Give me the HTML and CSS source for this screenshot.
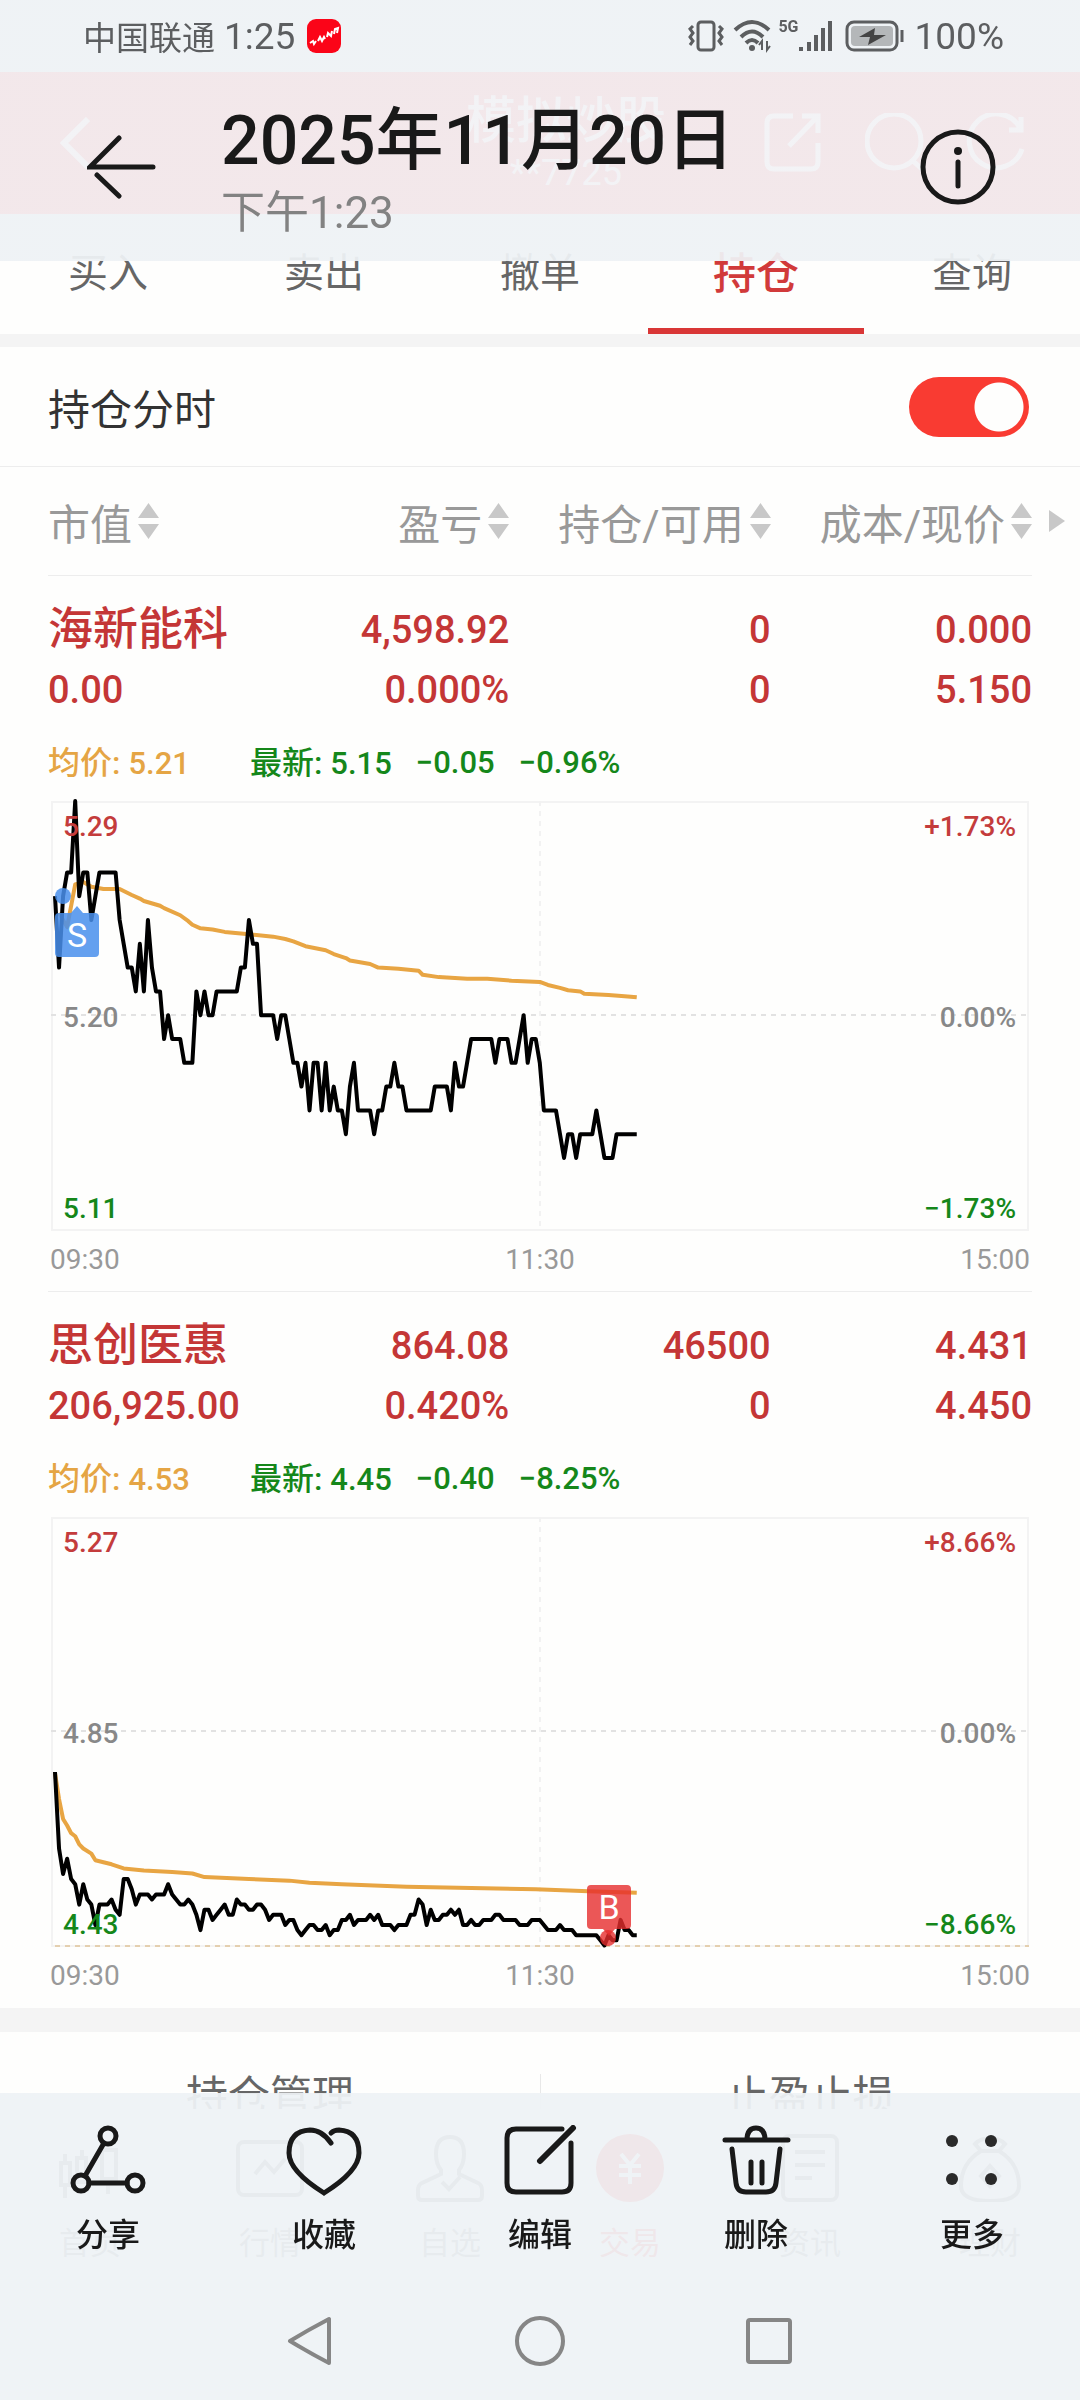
FILE: index.html
```html
<!DOCTYPE html>
<html lang="zh-CN">
<head>
    <meta charset="UTF-8">
    <meta name="viewport" content="width=device-width, initial-scale=1.0">
    <title>2025年11月20日</title>
    <link rel="stylesheet" href="styles.css">
</head>
<body>

<!-- 交易页面 -->
<div class="app">
    <header class="app-bar">
        <svg class="app-back" viewBox="0 0 30 52"><path d="M28 2L4 26L28 50"/></svg>
        <div class="app-title">
            <div class="app-name">模拟炒股</div>
            <div class="app-account">**7725</div>
        </div>
        <div class="app-icons">
            <svg viewBox="0 0 60 60"><path d="M29 3H10Q3 3 3 10V49Q3 56 10 56H47Q54 56 54 49V30M38 3H54V20M54 3L25 33"/></svg>
            <svg viewBox="0 0 60 60"><circle cx="29" cy="28" r="27"/><path d="M48 48L58 57"/></svg>
            <svg viewBox="0 0 60 60"><path d="M54 15A27 27 0 1 0 56 36M55 4V17H43"/></svg>
        </div>
    </header>

    <nav class="tabs">
        <a href="#">买入</a>
        <a href="#">卖出</a>
        <a href="#">撤单</a>
        <a href="#" class="active">持仓</a>
        <a href="#">查询</a>
    </nav>

    <div class="switch-row">
        <label for="minute-switch">持仓分时</label>
        <input type="checkbox" id="minute-switch" class="switch" checked>
    </div>

    <div class="holdings">
        <table>
            <colgroup><col class="col-name"><col><col><col></colgroup>
            <thead>
                <tr>
                    <th><button>市值<svg class="sort" viewBox="0 0 21 36"><path d="M0 15L10.500 0L21 15ZM0 21H21L10.500 36Z"/></svg></button></th>
                    <th><button>盈亏<svg class="sort" viewBox="0 0 21 36"><path d="M0 15L10.500 0L21 15ZM0 21H21L10.500 36Z"/></svg></button></th>
                    <th><button>持仓/可用<svg class="sort" viewBox="0 0 21 36"><path d="M0 15L10.500 0L21 15ZM0 21H21L10.500 36Z"/></svg></button></th>
                    <th><button>成本/现价<svg class="sort" viewBox="0 0 21 36"><path d="M0 15L10.500 0L21 15ZM0 21H21L10.500 36Z"/></svg></button></th>
                </tr>
            </thead>

            <!-- 海新能科 -->
            <tbody>
                <tr class="first"><td class="stock">海新能科</td><td>4,598.92</td><td>0</td><td>0.000</td></tr>
                <tr><td>0.00</td><td>0.000%</td><td>0</td><td>5.150</td></tr>
                <tr>
                    <td colspan="4" class="detail">
                        <div class="quote">
                            <span class="avg">均价: <b>5.21</b></span>
                            <span>最新: <b>5.15</b></span>
                            <b>−0.05</b>
                            <b>−0.96%</b>
                        </div>
                        <svg class="chart" viewBox="0 0 978 430">
                            <rect class="frame" x="1" y="1" width="976" height="428"/>
                            <path class="grid" d="M0 214H978"/>
                            <path class="grid light" d="M489 0V430"/>
                            <g transform="translate(4 0) scale(4.04 23.8)">
                                <polyline class="avg-line" points="1,4.7 3,5.3 5,3.5 7,3.4 9,3.6 12,3.7 16,3.7 19,3.95 21,4.1 22,4.2 26,4.4 27,4.5 31,4.8 33,5.05 34,5.2 36,5.35 39,5.4 42,5.5 48,5.6 54,5.7 57,5.8 59,5.9 62,6.1 67,6.27 69,6.43 72,6.6 73,6.7 78,6.85 80,7 85,7.05 90,7.13 91,7.3 95,7.4 102,7.47 107,7.47 113,7.55 120,7.6 122,7.73 125,7.85 127,7.95 130,8 131,8.1 137,8.15 141,8.2 144,8.25"/>
                                <polyline class="price-line" points="0,4 1,7 2,4 3,3 4,3 5,0 6,4 7,3 8,3 9,5 10,4 11,3 15,3 16,5 17,6 18,7 19,7 20,8 21,6 22,8 23,5 24,7 25,8 26,8 27,10 28,9 29,10 31,10 32,11 34,11 35,8 36,9 37,8 38,9 39,9 40,8 45,8 46,7 47,7 48,5 49,6 50,6 51,9 54,9 55,10 56,9 57,9 58,10 59,11 60,11 61,12 62,11 63,13 64,11 65,11 66,13 67,11 68,13 69,12 70,13 71,13 72,14 73,12 74,11 75,13 78,13 79,14 80,13 81,13 82,12 83,12 84,11 85,12 86,12 87,13 93,13 94,12 97,12 98,13 99,11 100,12 101,12 102,11 103,10 108,10 109,11 110,10 112,10 113,11 114,11 115,10 116,9 117,11 118,10 119,10 120,11 121,13 124,13 125,14 126,15 127,14 128,14 129,15 130,14 133,14 134,13 135,14 136,15 138,15 139,14 144,14"/>
                            </g>
                            <text class="up" x="12" y="35">5.29</text>
                            <text x="12" y="226">5.20</text>
                            <text class="down" x="12" y="417">5.11</text>
                            <text class="up end" x="965" y="35">+1.73%</text>
                            <text class="end" x="965" y="226">0.00%</text>
                            <text class="down end" x="965" y="417">−1.73%</text>
                            <g class="mark sell">
                                <circle cx="12" cy="95" r="8"/>
                                <path d="M8 112H20L26 105L32 112H44Q48 112 48 116V152Q48 156 44 156H8Q4 156 4 152V116Q4 112 8 112Z"/>
                                <text x="26" y="146">S</text>
                            </g>
                        </svg>
                        <div class="times"><span>09:30</span><span>11:30</span><span>15:00</span></div>
                    </td>
                </tr>
            </tbody>

            <!-- 思创医惠 -->
            <tbody>
                <tr class="first"><td class="stock">思创医惠</td><td>864.08</td><td>46500</td><td>4.431</td></tr>
                <tr><td>206,925.00</td><td>0.420%</td><td>0</td><td>4.450</td></tr>
                <tr>
                    <td colspan="4" class="detail">
                        <div class="quote">
                            <span class="avg">均价: <b>4.53</b></span>
                            <span>最新: <b>4.45</b></span>
                            <b>−0.40</b>
                            <b>−8.25%</b>
                        </div>
                        <svg class="chart" viewBox="0 0 978 430">
                            <rect class="frame" x="1" y="1" width="976" height="428"/>
                            <path class="grid" d="M0 214H978"/>
                            <path class="grid light" d="M489 0V430"/>
                            <path class="limit" d="M4 429H978"/>
                            <g transform="translate(4 0) scale(4.04 5.1)">
                                <polyline class="avg-line" points="0,50.2 1,55.3 2,59.2 3,60.5 4,62 5,62.6 6,64.2 7,65 9,66 10,67.3 14,68.1 17,68.9 22,69.3 29,69.6 34,69.9 37,70.6 48,71 58,71.3 63,71.7 71,72 87,72.5 119,73 132,73.4 144,73.7"/>
                                <polyline class="price-line" points="0,50 1,65 2,70 3,67 4,71 5,72 6,76 7,72 8,75 9,76 10,80 11,76 13,76 14,75 15,77 16,78 17,71 18,71 19,73 20,76 21,74 23,74 24,75 25,74 27,74 28,72 29,74 30,75 31,76 32,76 33,75 34,76 35,78 36,81 37,77 38,77 39,79 40,78 41,77 42,76 43,78 44,78 45,75 46,76 47,76 48,77 49,77 50,76 51,76 52,77 53,79 54,78 56,78 57,80 58,79 59,79 60,81 61,82 62,81 63,80 64,80 65,81 66,81 67,80 68,82 69,81 70,81 71,79 72,79 73,78 74,80 75,79 77,79 78,78 79,79 80,78 81,80 83,80 84,81 85,80 87,80 88,78 89,78 90,75 91,76 92,80 93,77 94,79 95,79 96,78 97,78 98,77 99,78 100,77 101,80 102,80 103,79 104,80 105,80 106,79 108,79 109,78 110,78 111,79 114,79 115,80 117,80 118,79 120,79 121,80 122,81 124,81 125,80 126,81 128,81 129,82 134,82 135,83 136,84 137,82 138,83 139,83 140,79 141,81 142,81 143,82 144,82"/>
                            </g>
                            <text class="up" x="12" y="35">5.27</text>
                            <text x="12" y="226">4.85</text>
                            <text class="down" x="12" y="417">4.43</text>
                            <text class="up end" x="965" y="35">+8.66%</text>
                            <text class="end" x="965" y="226">0.00%</text>
                            <text class="down end" x="965" y="417">−8.66%</text>
                            <g class="mark buy">
                                <circle cx="557" cy="421" r="8"/>
                                <path d="M540 368H576Q580 368 580 372V408Q580 412 576 412H564L558 419L552 412H540Q536 412 536 408V372Q536 368 540 368Z"/>
                                <text x="558" y="402">B</text>
                            </g>
                        </svg>
                        <div class="times"><span>09:30</span><span>11:30</span><span>15:00</span></div>
                    </td>
                </tr>
            </tbody>
        </table>
        <svg class="more-cols" viewBox="0 0 16 22"><path d="M0 0L16 11L0 22Z"/></svg>
    </div>

    <div class="manage">
        <a href="#">持仓管理</a>
        <a href="#">止盈止损</a>
    </div>

    <nav class="app-nav">
        <a href="#">
            <svg viewBox="0 0 68 68"><path d="M5 29H14V51H5ZM9 20V29M9 51V64M21 24H30V48H21ZM26 16V24M46 16H60V45H46ZM52 45V60"/></svg>
            首页
        </a>
        <a href="#">
            <svg viewBox="0 0 68 68"><rect x="2" y="8" width="64" height="53" rx="6"/><path d="M19 40L29 28L38 38L49 25"/></svg>
            行情
        </a>
        <a href="#">
            <svg viewBox="0 0 68 68"><path d="M25 36Q20 30 20 20Q20 3 34 3Q48 3 48 20Q48 30 43 36V40L62 49Q66 51 66 56V62Q66 66 62 66H6Q2 66 2 62V56Q2 51 6 49L25 40ZM26 48L33 55L44 43"/></svg>
            自选
        </a>
        <a href="#" class="active">
            <svg viewBox="0 0 68 68"><circle cx="34" cy="34" r="34"/><path d="M25 20L34 31L43 20M34 31V50M23 32H45M23 41H45"/></svg>
            交易
        </a>
        <a href="#">
            <svg viewBox="0 0 68 68"><rect x="7" y="2" width="54" height="64" rx="6"/><path d="M19 18H49M19 31H49M19 44H36"/></svg>
            资讯
        </a>
        <a href="#">
            <svg viewBox="0 0 68 68"><path d="M25 17L19 10Q26 3 34 6Q42 3 49 10L43 17ZM25 17C10 26 5 38 5 52Q5 67 34 67Q63 67 63 52C63 38 58 26 43 17M34 32L43 42L34 52L25 42Z"/></svg>
            理财
        </a>
    </nav>
</div>

<!-- 图库顶部 -->
<header class="viewer-top">
    <div class="status">
        <span class="carrier">中国联通</span>
        <span class="clock">1:25</span>
        <svg class="badge" viewBox="0 0 34 34">
            <rect width="34" height="34" rx="9"/>
            <path d="M3 24L6 22L7 25L9 22M11 22L13 18L15 22L17 18L18 20M20 18L21 14L24 17L25 12M27 15L28 10L31 9L30 14"/>
        </svg>
        <svg class="vibrate" viewBox="0 0 38 34">
            <rect x="11" y="3" width="16" height="28" rx="3"/>
            <path d="M6 7L3 10L6 14L3 18L6 22L3 26M32 7L35 10L32 14L35 18L32 22L35 26"/>
        </svg>
        <svg class="wifi" viewBox="0 0 38 34">
            <path d="M2 11Q19 -5 36 11M8 18Q19 7 30 18M13 24Q19 18 25 24"/>
            <circle cx="19" cy="29" r="3"/>
            <path class="thin" d="M29 31V22L26 26M34 22V31L37 27"/>
        </svg>
        <span class="net">5G</span>
        <svg class="signal" viewBox="0 0 34 34"><path d="M2 28V32M10 23V32M17 16V32M24 9V32M31 2V32"/></svg>
        <svg class="battery" viewBox="0 0 60 34">
            <rect class="shell" x="2" y="3" width="50" height="28" rx="7"/>
            <rect class="level" x="6" y="7" width="42" height="20" rx="4"/>
            <path class="bolt" d="M30 9L14 18H25L23 26L41 16H29Z"/>
            <path class="tip" d="M57 11V23"/>
        </svg>
        <span class="percent">100%</span>
    </div>
    <div class="viewer-bar">
        <button aria-label="返回">
            <svg class="back" viewBox="0 0 70 64"><path d="M32 3L3 32H66M10 40L32 61"/></svg>
        </button>
        <div class="viewer-title">
            <h1>2025年11月20日</h1>
            <p>下午1:23</p>
        </div>
        <button aria-label="详情">
            <svg class="info" viewBox="0 0 76 76"><circle cx="38" cy="38" r="35"/><path d="M38 33V57"/><circle class="dot" cx="38" cy="22" r="4"/></svg>
        </button>
    </div>
</header>

<!-- 图库底部 -->
<footer class="viewer-bottom">
    <div class="actions">
        <button>
            <svg viewBox="0 0 76 72"><circle cx="38" cy="11" r="8"/><circle cx="11" cy="58" r="8"/><circle cx="65" cy="58" r="8"/><path d="M34 18L15 51M19 58H57"/></svg>
            分享
        </button>
        <button>
            <svg viewBox="0 0 76 72"><path d="M45 18Q36 5 24 5Q3 6 3 28Q3 46 38 68Q73 46 73 28Q73 6 53 5Q48 5 45 8"/></svg>
            收藏
        </button>
        <button>
            <svg viewBox="0 0 76 72"><path d="M60 4H14Q5 4 5 13V58Q5 67 14 67H60Q69 67 69 58V18"/><path class="pen" d="M71 3L38 36"/></svg>
            编辑
        </button>
        <button>
            <svg viewBox="0 0 76 72"><path d="M7 15H70M29 15Q29 3 38 3Q47 3 47 15M14 24L18 58Q19 67 28 67H48Q57 67 58 58L62 24M33 37V58M44 37V58"/></svg>
            删除
        </button>
        <button>
            <svg class="dots" viewBox="0 0 76 72"><circle cx="18" cy="16" r="6"/><circle cx="57" cy="16" r="6"/><circle cx="18" cy="54" r="6"/><circle cx="57" cy="54" r="6"/></svg>
            更多
        </button>
    </div>
    <div class="system-nav">
        <button aria-label="返回"><svg viewBox="0 0 54 54"><path d="M45 5V49Q24 38 6 27Q24 16 45 5Z"/></svg></button>
        <button aria-label="主屏幕"><svg viewBox="0 0 54 54"><circle cx="27" cy="27" r="23"/></svg></button>
        <button aria-label="最近任务"><svg viewBox="0 0 54 54"><rect x="6" y="6" width="42" height="42" rx="2"/></svg></button>
    </div>
</footer>

</body>
</html>
```

FILE: styles.css
```css
* {
    box-sizing: border-box;
}

body {
    margin: 0;
    min-height: 100vh;
    background: #fefefd;
    font-family: Roboto, "Noto Sans CJK SC", sans-serif;
    color: #333;
}

a {
    color: inherit;
    text-decoration: none;
}

button {
    padding: 0;
    border: none;
    background: none;
    font: inherit;
    color: inherit;
    cursor: pointer;
}

svg {
    display: block;
    flex: none;
    fill: none;
    stroke: currentColor;
}

/* 交易页面 */
.app {
    padding-top: 72px;
}

.app-bar {
    display: flex;
    align-items: center;
    height: 142px;
    padding: 0 54px 0 60px;
    background: #ff4848;
    color: white;
}

.app-back {
    width: 30px;
    stroke-width: 6;
}

.app-title {
    margin-left: auto;
    margin-right: 98px;
    text-align: center;
}

.app-name {
    font-size: 50px;
    font-weight: 500;
    line-height: 60px;
}

.app-account {
    font-size: 36px;
    line-height: 44px;
}

.app-icons {
    display: flex;
    gap: 41px;
}

.app-icons svg {
    width: 60px;
    stroke-width: 5;
}

.tabs {
    display: grid;
    grid-template-columns: repeat(5, 1fr);
    height: 133px;
    border-bottom: 13px solid #f4f4f4;
    font-size: 40px;
    line-height: 120px;
    text-align: center;
    color: #666;
}

.tabs .active {
    box-shadow: inset 0 -6px #d93636;
    color: #d13a3a;
    font-size: 43px;
    font-weight: 500;
}

.switch-row {
    display: flex;
    align-items: center;
    justify-content: space-between;
    height: 120px;
    padding: 0 51px 0 48px;
    border-bottom: 1px solid #ededed;
    font-size: 42px;
}

.switch {
    appearance: none;
    width: 120px;
    height: 60px;
    margin: 0;
    border-radius: 30px;
    background: radial-gradient(circle at 90px 30px, #fefefd 24px, #f93b32 25px);
}

.holdings {
    position: relative;
    padding: 0 48px;
}

table {
    width: 100%;
    table-layout: fixed;
    border-collapse: separate;
    border-spacing: 0;
}

.col-name {
    width: 200px;
}

th {
    height: 109px;
    padding: 0;
    border-bottom: 1px solid #ededed;
    font-size: 42px;
    font-weight: 400;
    color: #999;
}

th button {
    display: flex;
    align-items: center;
    justify-content: flex-end;
    gap: 6px;
    width: 100%;
    white-space: nowrap;
}

th:first-child button {
    justify-content: flex-start;
}

.sort {
    width: 21px;
    fill: #c8c8c8;
    stroke: none;
}

.more-cols {
    position: absolute;
    top: 43px;
    right: 15px;
    width: 16px;
    fill: #c8c8c8;
    stroke: none;
}

td {
    height: 60px;
    padding: 0;
    font-size: 38px;
    font-weight: 500;
    line-height: 60px;
    text-align: right;
    white-space: nowrap;
    color: #c43636;
}

td:first-child {
    text-align: left;
}

.first td {
    height: 84px;
    padding-top: 24px;
}

.first .stock {
    font-size: 45px;
}

.detail {
    padding: 21px 0 11px;
    border-bottom: 1px solid #ededed;
}

tbody:last-child .detail {
    border-color: transparent;
}

.quote {
    display: flex;
    gap: 24px;
    margin-bottom: 15px;
    font-size: 32px;
    line-height: 44px;
    color: #15871a;
}

.quote b {
    font-size: 31px;
    font-weight: 500;
}

.quote .avg {
    margin-right: 36px;
    color: #e5a544;
}

.chart {
    width: calc(100% - 6px);
    margin: 0 3px;
    overflow: visible;
}

.frame {
    stroke: #f3f3f3;
    stroke-width: 2;
}

.grid {
    stroke: #e2e2e2;
    stroke-width: 2;
    stroke-dasharray: 5 5;
}

.grid.light {
    stroke: #f2f2f2;
}

.limit {
    stroke: #d6ac6c;
    stroke-dasharray: 5 5;
}

.avg-line,
.price-line {
    stroke-width: 4;
    stroke-linejoin: round;
    vector-effect: non-scaling-stroke;
}

.avg-line {
    stroke: #e8a543;
}

.price-line {
    stroke: black;
}

.chart text {
    fill: #888;
    stroke: none;
    font-size: 28px;
    font-weight: 500;
}

.chart .up {
    fill: #c43c3c;
}

.chart .down {
    fill: #15871a;
}

.chart .end {
    text-anchor: end;
}

.mark {
    stroke: none;
}

.sell {
    fill: rgba(73, 143, 236, 0.85);
}

.buy {
    fill: rgba(230, 45, 45, 0.8);
}

.chart .mark text {
    fill: white;
    font-size: 34px;
    font-weight: 400;
    text-anchor: middle;
}

.times {
    display: flex;
    justify-content: space-between;
    margin: 9px 0 0;
    padding: 0 2px;
    font-size: 28px;
    font-weight: 400;
    line-height: 40px;
    color: #999;
}

.manage {
    display: grid;
    grid-template-columns: 1fr 1fr;
    padding: 42px 0;
    border-top: 24px solid #f4f4f4;
    font-size: 42px;
    line-height: 46px;
    text-align: center;
    color: #666;
}

.manage a + a {
    border-left: 1px solid #e8e8e8;
}

.app-nav {
    position: fixed;
    right: 0;
    bottom: 0;
    left: 0;
    display: grid;
    grid-template-columns: repeat(6, 1fr);
    height: 291px;
    padding-top: 25px;
    background: #f8f8f8;
    font-size: 31px;
    color: #777;
}

.app-nav a {
    display: flex;
    flex-direction: column;
    align-items: center;
    gap: 16px;
}

.app-nav svg {
    width: 68px;
    stroke-width: 4;
}

.app-nav .active {
    color: #ff3030;
}

.app-nav .active circle {
    fill: currentColor;
    stroke: none;
}

.app-nav .active path {
    stroke: white;
}

/* 图库顶部 */
.viewer-top,
.viewer-bottom {
    position: fixed;
    right: 0;
    left: 0;
    background: rgba(238, 242, 245, 0.94);
    color: #191919;
}

.viewer-top {
    top: 0;
    height: 261px;
    background: linear-gradient(rgba(238, 242, 245, 0.94) 72px, rgba(242, 242, 245, 0.94) 72px 214px, rgba(238, 242, 245, 0.94) 214px);
}

.status {
    display: flex;
    align-items: center;
    height: 72px;
    padding: 0 76px 0 83px;
    font-size: 37px;
    color: #5c5e60;
}

.carrier {
    margin-right: 9px;
    font-size: 33px;
}

.badge {
    width: 34px;
    margin-left: 12px;
    margin-right: auto;
    stroke: white;
    stroke-width: 2;
}

.badge rect {
    fill: #fb0418;
    stroke: none;
}

.vibrate {
    width: 38px;
    stroke-width: 3;
}

.wifi {
    width: 38px;
    margin-left: 8px;
    stroke-width: 4;
}

.wifi circle {
    fill: currentColor;
    stroke: none;
}

.wifi .thin {
    stroke-width: 2;
}

.net {
    align-self: flex-start;
    margin: 18px 0 0 7px;
    font-size: 16px;
    font-weight: 700;
    line-height: 18px;
}

.signal {
    width: 34px;
    stroke-width: 4;
}

.battery {
    width: 60px;
    margin: 0 10px 0 12px;
    stroke-width: 3;
}

.battery .level {
    fill: #b4b7b9;
    stroke: none;
}

.battery .bolt {
    fill: #444;
    stroke: none;
}

.viewer-bar {
    display: flex;
    align-items: center;
    height: 189px;
    padding: 0 84px 0 87px;
}

.back {
    width: 70px;
    stroke-width: 5;
    stroke-linecap: round;
}

.viewer-title {
    flex: 1;
    padding: 12px 0 0 64px;
}

.viewer-title h1 {
    margin: 0;
    font-size: 68px;
    font-weight: 500;
    line-height: 80px;
}

.viewer-title p {
    margin: 0;
    font-size: 44px;
    line-height: 64px;
    color: #828282;
}

.info {
    width: 76px;
    stroke-width: 5;
    stroke-linecap: round;
}

.info .dot {
    fill: currentColor;
    stroke: none;
}

/* 图库底部 */
.viewer-bottom {
    bottom: 0;
    height: 307px;
    padding-top: 32px;
}

.actions {
    display: grid;
    grid-template-columns: repeat(5, 1fr);
    font-size: 32px;
    font-weight: 500;
    line-height: 44px;
}

.actions button {
    display: flex;
    flex-direction: column;
    align-items: center;
    gap: 16px;
}

.actions svg {
    width: 76px;
    stroke-width: 5;
    stroke-linecap: round;
}

.actions .pen {
    stroke-width: 6;
}

.actions .dots {
    fill: #2a2a2a;
    stroke: none;
}

.system-nav {
    display: flex;
    justify-content: center;
    gap: 175px;
    margin-top: 57px;
    color: #868686;
}

.system-nav svg {
    width: 54px;
    stroke-width: 4;
    stroke-linejoin: round;
}
```
